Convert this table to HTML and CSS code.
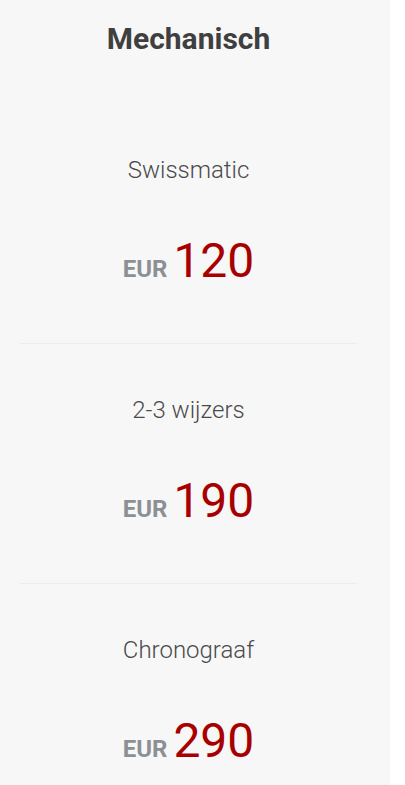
FILE: index.html
```html
<!DOCTYPE html>
<html lang="nl">
<head>
    <meta charset="UTF-8">
    <meta name="viewport" content="width=device-width, initial-scale=1.0">
    <title>Mechanisch</title>
    <link rel="stylesheet" href="styles.css">
</head>
<body>
    <div class="column">
        <h2 class="title">Mechanisch</h2>

        <div class="item">
            <p class="name">Swissmatic</p>
            <p class="price"><span class="currency">EUR</span><span class="amount">120</span></p>
        </div>

        <div class="item">
            <p class="name">2-3 wijzers</p>
            <p class="price"><span class="currency">EUR</span><span class="amount">190</span></p>
        </div>

        <div class="item">
            <p class="name">Chronograaf</p>
            <p class="price"><span class="currency">EUR</span><span class="amount">290</span></p>
        </div>
    </div>
</body>
</html>
```

FILE: styles.css
```css
body {
    font-family: Roboto, "Liberation Sans", sans-serif;
    background-color: #fff;
    margin: 0;
    padding: 0;
}

.column {
    width: 390px;
    min-height: 785px;
    background-color: #f7f7f7;
    padding: 22px 33px 0 20px;
    box-sizing: border-box;
}

.title {
    margin: 0 0 48px;
    font-size: 30px;
    line-height: 34px;
    font-weight: 700;
    color: #3f3f3f;
    text-align: center;
}

.item {
    padding: 51px 0 58px;
    border-bottom: 1px solid #ececec;
    text-align: center;
}

.name {
    margin: 0;
    font-size: 24px;
    line-height: 30px;
    font-weight: 300;
    color: #4a4a4a;
}

.price {
    margin: 52px 0 0;
    font-size: 48px;
    line-height: 48px;
}

.currency {
    margin-right: 6px;
    font-size: 24px;
    line-height: 1;
    font-weight: 700;
    color: #8c9095;
}

.amount {
    font-weight: 400;
    color: #a80000;
}
```
